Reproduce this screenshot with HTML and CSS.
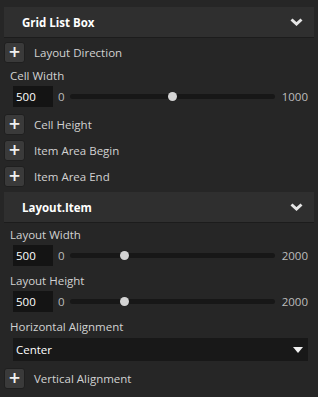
FILE: index.html
```html
<!DOCTYPE html>
<html lang="en">
<head>
    <meta charset="UTF-8">
    <title>Inspector</title>
    <link rel="stylesheet" href="styles.css">
</head>
<body>
    <div class="panel">
        <div class="section-head">
            <span>Grid List Box</span>
            <svg class="chevron" width="13" height="8" viewBox="0 0 13 8"><path d="M1.5 1.5 L6.5 6 L11.5 1.5" fill="none" stroke="#e6e6e6" stroke-width="3" stroke-linejoin="miter"/></svg>
        </div>

        <div class="add-row"><button class="plus">+</button><span>Layout Direction</span></div>

        <div class="field">
            <div class="label">Cell Width</div>
            <div class="slider-row">
                <div class="num">500</div>
                <span class="min">0</span>
                <div class="track"><div class="thumb" style="left: 50%"></div></div>
                <span class="max">1000</span>
            </div>
        </div>

        <div class="add-row"><button class="plus">+</button><span>Cell Height</span></div>
        <div class="add-row"><button class="plus">+</button><span>Item Area Begin</span></div>
        <div class="add-row"><button class="plus">+</button><span>Item Area End</span></div>

        <div class="section-head">
            <span>Layout.Item</span>
            <svg class="chevron" width="13" height="8" viewBox="0 0 13 8"><path d="M1.5 1.5 L6.5 6 L11.5 1.5" fill="none" stroke="#e6e6e6" stroke-width="3" stroke-linejoin="miter"/></svg>
        </div>

        <div class="field">
            <div class="label">Layout Width</div>
            <div class="slider-row">
                <div class="num">500</div>
                <span class="min">0</span>
                <div class="track"><div class="thumb" style="left: 26.5%"></div></div>
                <span class="max">2000</span>
            </div>
        </div>

        <div class="field">
            <div class="label">Layout Height</div>
            <div class="slider-row">
                <div class="num">500</div>
                <span class="min">0</span>
                <div class="track"><div class="thumb" style="left: 26.5%"></div></div>
                <span class="max">2000</span>
            </div>
        </div>

        <div class="field">
            <div class="label">Horizontal Alignment</div>
            <div class="select">
                <span>Center</span>
                <svg width="10" height="6" viewBox="0 0 10 6"><path d="M0 0 H10 L5 6 Z" fill="#f0f0f0"/></svg>
            </div>
        </div>

        <div class="add-row"><button class="plus">+</button><span>Vertical Alignment</span></div>
    </div>
</body>
</html>
```

FILE: styles.css
```css
/* Dark property inspector */
body {
    margin: 0;
    background-color: #262626;
    font-family: "Open Sans", "Noto Sans", sans-serif;
    font-size: 11.5px;
    color: #d2d2d2;
}
.panel {
    padding: 7px 4px 0 4px;
}
.section-head {
    height: 30px;
    background-color: #2f2f2f;
    border-bottom: 1px solid #1c1c1c;
    display: flex;
    align-items: center;
    justify-content: space-between;
    padding: 0 11px 0 18px;
    margin-bottom: 4px;
    font-weight: bold;
    color: #ffffff;
}
.section-head .chevron {
    margin-top: -1px;
}
.add-row {
    display: flex;
    align-items: center;
    height: 21px;
    margin-bottom: 5px;
}
.add-row span {
    margin-left: 9px;
    margin-top: -1px;
}
.plus {
    width: 21px;
    height: 21px;
    padding: 0;
    background-color: #3a3a3a;
    border: 1px solid #1f1f1f;
    border-radius: 3px;
    color: #f0f0f0;
    font-family: "DejaVu Sans", sans-serif;
    font-size: 15px;
    font-weight: bold;
    line-height: 19px;
}
.field {
    padding: 0 6px 0 6px;
    margin-bottom: 7px;
}
.label {
    height: 16px;
    line-height: 16px;
    margin-bottom: 2px;
}
.slider-row {
    display: flex;
    align-items: center;
    height: 21px;
    padding-left: 3px;
}
.num {
    width: 37px;
    height: 21px;
    line-height: 21px;
    padding-left: 3px;
    background-color: #141414;
    color: #ffffff;
}
.min {
    margin-left: 5px;
    color: #bdbdbd;
}
.max {
    color: #bdbdbd;
}
.track {
    flex: 1;
    position: relative;
    height: 5px;
    margin: 0 7px 0 5px;
    background-color: #171717;
    border-radius: 3px;
}
.thumb {
    position: absolute;
    top: -2px;
    width: 9px;
    height: 9px;
    margin-left: -4px;
    border-radius: 50%;
    background-color: #d4d4d4;
}
.select {
    display: flex;
    align-items: center;
    justify-content: space-between;
    height: 23px;
    margin: 3px 0 0 3px;
    padding: 0 5px 0 3px;
    background-color: #181818;
    color: #ffffff;
}
```
